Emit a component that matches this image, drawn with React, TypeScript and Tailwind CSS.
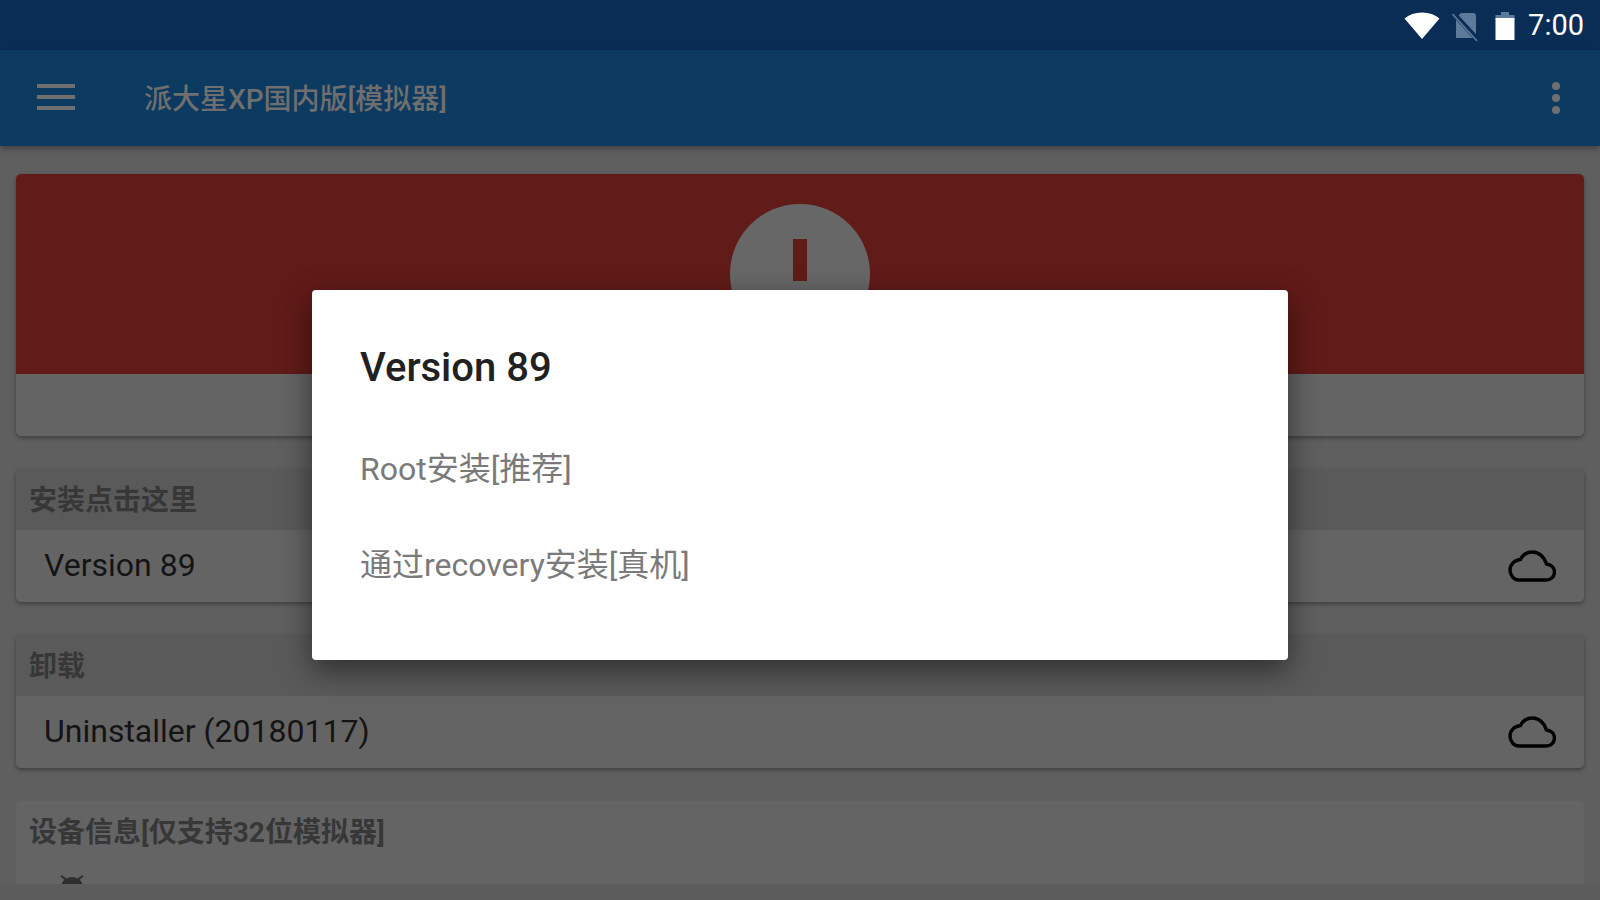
const font = "font-['Roboto','Noto_Sans_CJK_SC',sans-serif]"

function Cloud () {
  return (
    <svg width="48" height="32" viewBox="0 0 48 32" fill="none" stroke="#000" strokeWidth="3.4">
      <path d="M11 30 H38 C43 30 46.5 26.5 46.5 22 C46.5 17.5 43 14.5 38.5 14 C36.5 7 31 2 24.5 2 C19 2 15 4.5 12.5 9.5 C6.5 10 2 14.5 2 20 C2 25.5 6 30 11 30 Z" />
    </svg>
  )
}

function Bug () {
  return (
    <svg width="24" height="24" viewBox="0 0 24 24" fill="#2e2e2e">
      <path d="M1.5 1 L6.5 4.5 C9.5 2.8 14.5 2.8 17.5 4.5 L22.5 1 L23.5 2.5 L19.5 5.8 C21.5 7.5 22.5 9.5 22.5 12 L1.5 12 C1.5 9.5 2.5 7.5 4.5 5.8 L0.5 2.5 Z" />
      <rect x="1.5" y="12" width="21" height="12" />
    </svg>
  )
}

function SectionCard ({ title, item }: { title: string; item: string }) {
  return (
    <div className="rounded-[5px] bg-[#646464] shadow-[0_2px_4px_rgba(0,0,0,0.35)] overflow-hidden">
      <div className="h-[61px] bg-[#5a5a5a] flex items-center pl-[13px] pt-[3px] text-[28px] font-bold text-[#373737]">{title}</div>
      <div className="h-[72px] flex items-center justify-between pl-[28px] pr-[28px] text-[32px] text-[#141414]">
        <span className="-mt-[2px]">{item}</span>
        <Cloud />
      </div>
    </div>
  )
}

export default function App () {
  return (
    <div className={`relative flex h-[900px] w-[1600px] flex-col overflow-hidden bg-[#5f5f5f] ${font}`}>
      <div className="flex h-[50px] shrink-0 items-center justify-end bg-[#0a2d55] pr-[16px]">
        <svg width="36" height="28" viewBox="0 0 36 28" fill="#fff" className="mr-[12px] mt-[1px]">
          <path d="M18 27 L0.5 6.5 C5 2.5 11 0.5 18 0.5 C25 0.5 31 2.5 35.5 6.5 Z" />
        </svg>
        <svg width="28" height="30" viewBox="0 0 28 30" className="mr-[15px] mt-[1px]">
          <path d="M9 2 H21 Q24 2 24 5 V27 H4 V7 Z" fill="#5c7a9a" />
          <path d="M1 2 L26 29" stroke="#0a2d55" strokeWidth="5" />
          <path d="M0.5 3 L25 30" stroke="#5c7a9a" strokeWidth="1.6" />
        </svg>
        <svg width="20" height="30" viewBox="0 0 20 30" className="mr-[13px] mt-[1px]">
          <path d="M6 1 H14 V4 H19.5 V9 H0.5 V4 H6 Z" fill="#5c7a9a" />
          <rect x="0.5" y="7" width="19" height="22" fill="#fff" />
        </svg>
        <span className="text-[29px] leading-none text-white">7:00</span>
      </div>

      <div className="z-10 flex h-[96px] shrink-0 items-center bg-[#0d3a60] shadow-[0_3px_6px_rgba(0,0,0,0.3)]">
        <div className="mb-[2px] ml-[37px] flex w-[38px] flex-col gap-[7px]">
          <div className="h-[4px] bg-[#6f6f6f]" />
          <div className="h-[4px] bg-[#6f6f6f]" />
          <div className="h-[4px] bg-[#6f6f6f]" />
        </div>
        <span className="ml-[69px] pt-[3px] text-[28px] font-medium text-[#6f6f6f]">派大星XP国内版[模拟器]</span>
        <div className="ml-auto mr-[40px] flex flex-col gap-[4px]">
          <div className="size-[8px] rounded-full bg-[#6f6f6f]" />
          <div className="size-[8px] rounded-full bg-[#6f6f6f]" />
          <div className="size-[8px] rounded-full bg-[#6f6f6f]" />
        </div>
      </div>

      <div className="flex flex-1 flex-col gap-[33px] overflow-hidden px-[16px] pt-[28px]">
        <div className="shrink-0 overflow-hidden rounded-[5px] bg-[#646464] shadow-[0_2px_4px_rgba(0,0,0,0.35)]">
          <div className="flex h-[200px] justify-center bg-[#611b18] pt-[30px]">
            <div className="flex size-[140px] justify-center rounded-full bg-[#676767] pt-[35px]">
              <div className="h-[42px] w-[14px] bg-[#611b18]" />
            </div>
          </div>
          <div className="h-[62px]" />
        </div>
        <div className="shrink-0"><SectionCard title="安装点击这里" item="Version 89" /></div>
        <div className="shrink-0"><SectionCard title="卸载" item="Uninstaller (20180117)" /></div>
        <div className="h-[84px] shrink-0 overflow-hidden rounded-t-[5px] bg-[#646464]">
          <div className="flex h-[61px] items-center pl-[13px] pt-[3px] text-[28px] font-bold text-[#373737]">设备信息[仅支持32位模拟器]</div>
          <div className="pl-[44px] pt-[12px]"><Bug /></div>
        </div>
      </div>
      <div className="h-[16px] shrink-0 bg-[#5c5c5c]" />

      {/* dialog sits over the dimmed page */}
      <div className="absolute left-[312px] top-[290px] flex h-[370px] w-[976px] flex-col rounded-[4px] bg-white pl-[48px] shadow-[0_10px_30px_rgba(0,0,0,0.5)]">
        <div className="mt-[50px] text-[40px] font-medium leading-[56px] text-[#212121]">Version 89</div>
        <div className="mt-[49px] text-[32px] leading-[48px] text-[#7a7a7a]">Root安装[推荐]</div>
        <div className="mt-[48px] text-[32px] leading-[48px] text-[#7a7a7a]">通过recovery安装[真机]</div>
      </div>
    </div>
  )
}
